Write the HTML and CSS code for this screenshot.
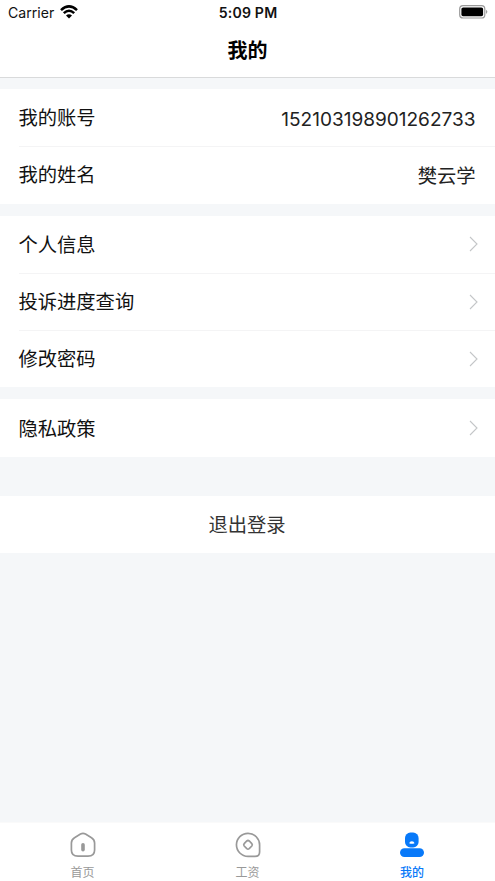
FILE: index.html
```html
<!DOCTYPE html>
<html lang="zh-CN">
<head>
<meta charset="utf-8">
<title>我的</title>
<link rel="stylesheet" href="styles.css">
</head>
<body>
<header class="header">
  <div class="status">
    <div class="carrier"><span>Carrier</span>
      <svg width="18" height="14" viewBox="0 0 18 14" fill="none" stroke="#000" stroke-width="2.5"><path d="M1 5.1Q9-2.3 17 5.1M3.8 8.2Q9 3.3 14.2 8.2"/><path d="M6 10.5Q9 7.8 12 10.5L9 13.5Z" fill="#000" stroke="none"/></svg>
    </div>
    <div class="time">5:09 PM</div>
    <svg class="battery" width="29" height="14" viewBox="0 0 29 14"><rect x=".7" y=".7" width="25.1" height="12.3" rx="3.3" fill="#fff" stroke="#999" stroke-width="1.2"/><rect x="2.4" y="2.4" width="21.7" height="8.9" rx="1.7"/><path d="M27.2 4.8Q29.4 6.8 27.2 8.9Z" fill="#888"/></svg>
  </div>
  <h1 class="title">我的</h1>
</header>
<main class="content">
  <section class="group">
    <div class="row"><span class="label">我的账号</span><span class="value number">152103198901262733</span></div>
    <div class="row"><span class="label">我的姓名</span><span class="value">樊云学</span></div>
  </section>
  <section class="group">
    <div class="row"><span class="label">个人信息</span><svg class="arrow" viewBox="0 0 9 16"><path d="M1 1l7 7-7 7"/></svg></div>
    <div class="row"><span class="label">投诉进度查询</span><svg class="arrow" viewBox="0 0 9 16"><path d="M1 1l7 7-7 7"/></svg></div>
    <div class="row"><span class="label">修改密码</span><svg class="arrow" viewBox="0 0 9 16"><path d="M1 1l7 7-7 7"/></svg></div>
  </section>
  <section class="group">
    <div class="row"><span class="label">隐私政策</span><svg class="arrow" viewBox="0 0 9 16"><path d="M1 1l7 7-7 7"/></svg></div>
  </section>
  <button class="logout">退出登录</button>
</main>
<nav class="tabs">
  <div class="tab">
    <svg width="26" height="26" viewBox="0 0 26 26" fill="none" stroke="#999" stroke-width="1.7"><path d="M10.5 2Q13 .7 15.5 2L21.5 5.8Q24.6 7.7 24.6 11V18Q24.6 24.2 18 24.2H8Q1.4 24.2 1.4 18V11Q1.4 7.7 4.5 5.8Z"/><path d="M13 12.8v5" stroke-width="3.6" stroke-linecap="round"/></svg>
    <span>首页</span>
  </div>
  <div class="tab">
    <svg width="26" height="26" viewBox="0 0 26 26" fill="none" stroke="#999" stroke-width="1.7"><path d="M13 1.3A11.6 11.6 0 0 1 24.6 13V20Q24.6 24.4 20 24.4H13A11.55 11.55 0 0 1 13 1.3Z"/><path d="M11.8 9Q13 8 14.2 9L16.8 11.6Q17.8 12.8 16.8 14L14.2 16.6Q13 17.6 11.8 16.6L9.2 14Q8.2 12.8 9.2 11.6Z"/></svg>
    <span>工资</span>
  </div>
  <div class="tab active">
    <svg width="26" height="26" viewBox="0 0 26 26" fill="#0879f9"><rect x="6" y=".6" width="13.6" height="14.8" rx="5.4"/><rect x="1" y="16.2" width="24" height="8.8" rx="4.4"/><path d="M10.2 11.2q.4-2 2.65-2t2.65 2q-2.65 1.2-5.3 0Z" fill="#fff"/></svg>
    <span>我的</span>
  </div>
</nav>
</body>
</html>
```
FILE: styles.css
```css
* { box-sizing: border-box; }
body {
  margin: 0;
  height: 881px;
  display: flex;
  flex-direction: column;
  overflow: hidden;
  background: #f5f7f9;
  color: #111;
  font-family: Inter, "Noto Sans CJK SC", sans-serif;
}
.header {
  height: 78px;
  background: #fff;
  border-bottom: 1px solid #d9dadb;
}
.status {
  height: 25px;
  display: grid;
  grid-template-columns: 1fr auto 1fr;
  align-items: center;
  padding: 0 7px 0 8px;
  font-size: 14.1px;
}
.carrier { display: flex; align-items: center; gap: 6px; }
.carrier svg { margin-top: -1px; }
.time { font-weight: 600; letter-spacing: .2px; }
.battery { justify-self: end; margin-top: -1px; }
.title {
  margin: 0;
  height: 52px;
  line-height: 53px;
  text-align: center;
  font-size: 20px;
  font-weight: 700;
  color: #000;
}
.content { flex: 1; padding-top: 11px; }
.group { margin-bottom: 12px; background: #fff; }
.row {
  height: 57.3px;
  margin-left: 18.5px;
  padding-right: 19.5px;
  display: flex;
  align-items: center;
  justify-content: space-between;
  font-size: 19.3px;
  line-height: 29px;
}
.row + .row { box-shadow: inset 0 1px #f4f4f5; }
.label { padding-top: 2px; }
.value { color: #222; padding-top: 3px; }
.number { font-size: 19.05px; }
.arrow {
  width: 9px;
  height: 16px;
  margin-right: -2px;
  fill: none;
  stroke: #c4c6c8;
  stroke-width: 1.1;
}
.logout {
  display: block;
  width: 100%;
  height: 57px;
  margin: 39.4px 0 0;
  padding: 0 1px 0 0;
  border: 0;
  background: #fff;
  color: #333;
  font: 19.3px/58px Inter, "Noto Sans CJK SC", sans-serif;
}
.tabs {
  height: 59px;
  display: grid;
  grid-template-columns: repeat(3, 1fr);
  background: #fff;
  border-top: 1px solid #fafafa;
}
.tab {
  display: flex;
  flex-direction: column;
  align-items: center;
  padding-top: 9px;
  color: #999;
  font-size: 12px;
  line-height: 18px;
}
.tab svg { display: block; }
.tab span { margin-top: 6px; }
.active { padding-right: 1px; color: #0879f9; font-weight: 500; }
```
